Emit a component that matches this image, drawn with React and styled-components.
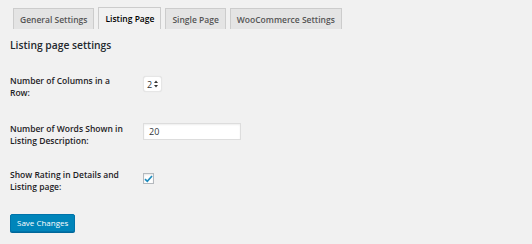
import React from 'react';
import styled, { createGlobalStyle } from 'styled-components';

const GlobalStyle = createGlobalStyle`
  html, body {
    margin: 0;
    padding: 0;
    background: #f1f1f1;
  }
  body {
    font-family: "Open Sans", "Liberation Sans", sans-serif;
    color: #23282d;
  }
`;

const Wrap = styled.div`
  padding: 7px 10px 0 10px;
  width: 532px;
  height: 244px;
  box-sizing: border-box;
`;

const TabBar = styled.div`
  display: flex;
  gap: 4px;
  padding-left: 3px;
  height: 22px;
  align-items: flex-end;
`;

const Tab = styled.div`
  height: ${p => (p.$active ? '22px' : '21px')};
  box-sizing: border-box;
  padding: 0 6px;
  display: flex;
  align-items: center;
  font-size: 8.5px;
  font-weight: 600;
  color: ${p => (p.$active ? '#000' : '#555')};
  background: ${p => (p.$active ? '#f1f1f1' : '#e4e4e4')};
  border: 1px solid #ccc;
  border-bottom: none;
`;

const Heading = styled.h2`
  margin: 9px 0 0;
  font-size: 10.3px;
  font-weight: 600;
  line-height: 14px;
  color: #23282d;
`;

const Form = styled.div`
  display: grid;
  grid-template-columns: 133px 1fr;
  grid-template-rows: 48px 46px 40px;
  margin-top: 23px;
`;

const Label = styled.div`
  font-size: 8.5px;
  font-weight: 600;
  line-height: 11.5px;
  color: #1d2125;
  padding-right: 12px;
`;

const Field = styled.div`
  display: flex;
  align-items: flex-start;
  padding-top: ${p => p.$top || 0}px;
`;

const SelectBox = styled.div`
  width: 19px;
  height: 16px;
  box-sizing: border-box;
  background: #fff;
  border: 1px solid #e6e6e6;
  border-radius: 3px;
  display: flex;
  align-items: center;
  justify-content: center;
  gap: 2px;
  font-size: 9px;
  color: #333;
  box-shadow: 0 0 1px rgba(0,0,0,0.1);
`;

const TextInput = styled.div`
  width: 98px;
  height: 17px;
  box-sizing: border-box;
  background: #fff;
  border: 1px solid #ddd;
  box-shadow: inset 0 1px 2px rgba(0,0,0,0.07);
  font-size: 9px;
  color: #32373c;
  padding-left: 5px;
  display: flex;
  align-items: center;
`;

const Checkbox = styled.div`
  width: 11px;
  height: 11px;
  box-sizing: border-box;
  background: #fff;
  border: 1px solid #b4b9be;
  box-shadow: inset 0 1px 2px rgba(0,0,0,0.1);
  display: flex;
  align-items: center;
  justify-content: center;
`;

const SaveButton = styled.div`
  display: inline-flex;
  align-items: center;
  height: 18px;
  box-sizing: border-box;
  padding: 0 6px;
  background: #0085ba;
  border: 1px solid #0073aa;
  border-radius: 2px;
  color: #fff;
  font-size: 8px;
  font-weight: 400;
  box-shadow: 0 1px 0 #006799;
`;

const Arrows = () => (
  <svg width="4" height="8" viewBox="0 0 4 8">
    <path d="M0 3 L2 0.5 L4 3 Z" fill="#333" />
    <path d="M0 5 L2 7.5 L4 5 Z" fill="#333" />
  </svg>
);

const Check = () => (
  <svg width="9" height="8" viewBox="0 0 9 8">
    <path d="M1 4.2 L3.3 6.3 L8 1" stroke="#1e8cbe" strokeWidth="1.7" fill="none" />
  </svg>
);

const tabs = ['General Settings', 'Listing Page', 'Single Page', 'WooCommerce Settings'];

const App = () => {
  return (
    <>
      <GlobalStyle />
      <Wrap>
        <TabBar>
          {tabs.map(t => (
            <Tab key={t} $active={t === 'Listing Page'}>{t}</Tab>
          ))}
        </TabBar>
        <Heading>Listing page settings</Heading>
        <Form>
          <Label>Number of Columns in a Row:</Label>
          <Field $top={1}>
            <SelectBox>2 <Arrows /></SelectBox>
          </Field>
          <Label>Number of Words Shown in Listing Description:</Label>
          <Field $top={0}>
            <TextInput>20</TextInput>
          </Field>
          <Label>Show Rating in Details and Listing page:</Label>
          <Field $top={4}>
            <Checkbox><Check /></Checkbox>
          </Field>
        </Form>
        <SaveButton>Save Changes</SaveButton>
      </Wrap>
    </>
  );
};

export default App;
